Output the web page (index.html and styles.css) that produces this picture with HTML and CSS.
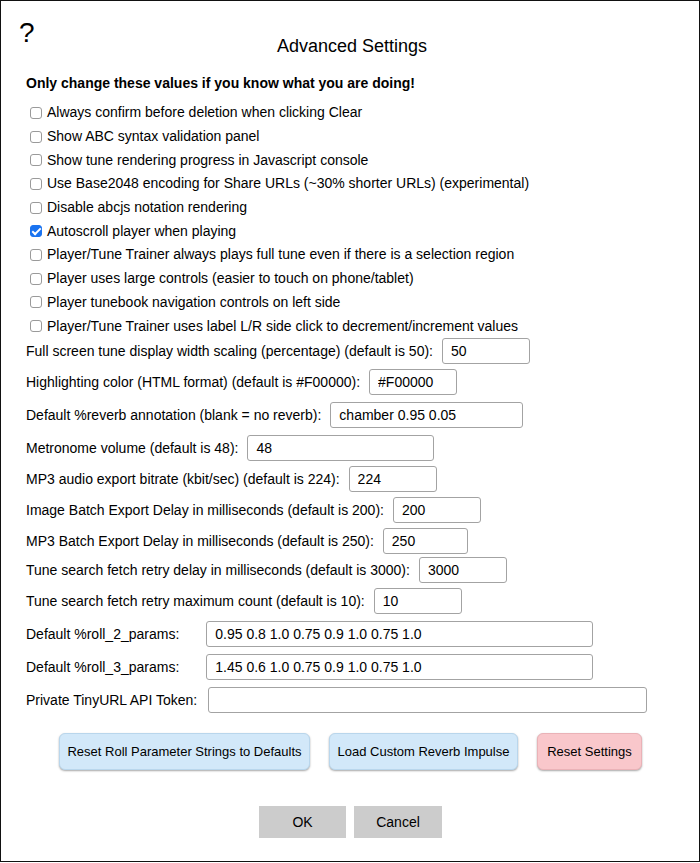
FILE: index.html
```html
<!DOCTYPE html>
<html>
<head>
<meta charset="utf-8">
<link rel="stylesheet" href="styles.css">
</head>
<body>
<div class="dialog">
  <div class="help">?</div>
  <div class="title">Advanced Settings</div>
  <div class="warning">Only change these values if you know what you are doing!</div>
  <div class="checks">
    <label class="check"><input type="checkbox"><span>Always confirm before deletion when clicking Clear</span></label>
    <label class="check"><input type="checkbox"><span>Show ABC syntax validation panel</span></label>
    <label class="check"><input type="checkbox"><span>Show tune rendering progress in Javascript console</span></label>
    <label class="check"><input type="checkbox"><span>Use Base2048 encoding for Share URLs (~30% shorter URLs) (experimental)</span></label>
    <label class="check"><input type="checkbox"><span>Disable abcjs notation rendering</span></label>
    <label class="check"><input type="checkbox" checked><span>Autoscroll player when playing</span></label>
    <label class="check"><input type="checkbox"><span>Player/Tune Trainer always plays full tune even if there is a selection region</span></label>
    <label class="check"><input type="checkbox"><span>Player uses large controls (easier to touch on phone/tablet)</span></label>
    <label class="check"><input type="checkbox"><span>Player tunebook navigation controls on left side</span></label>
    <label class="check"><input type="checkbox"><span>Player/Tune Trainer uses label L/R side click to decrement/increment values</span></label>
  </div>
  <div class="fields">
    <div class="field first"><span>Full screen tune display width scaling (percentage) (default is 50):</span><input class="in w-s" type="text" value="50"></div>
    <div class="field"><span>Highlighting color (HTML format) (default is #F00000):</span><input class="in w-s" type="text" value="#F00000"></div>
    <div class="field wide"><span>Default %reverb annotation (blank = no reverb):</span><input class="in w-m" type="text" value="chamber 0.95 0.05"></div>
    <div class="field wide"><span>Metronome volume (default is 48):</span><input class="in w-m2" type="text" value="48"></div>
    <div class="field"><span>MP3 audio export bitrate (kbit/sec) (default is 224):</span><input class="in w-s" type="text" value="224"></div>
    <div class="field"><span>Image Batch Export Delay in milliseconds (default is 200):</span><input class="in w-s" type="text" value="200"></div>
    <div class="field"><span>MP3 Batch Export Delay in milliseconds (default is 250):</span><input class="in w-s2" type="text" value="250"></div>
    <div class="field tight"><span>Tune search fetch retry delay in milliseconds (default is 3000):</span><input class="in w-s" type="text" value="3000"></div>
    <div class="field"><span>Tune search fetch retry maximum count (default is 10):</span><input class="in w-s" type="text" value="10"></div>
    <div class="field wide"><span>Default %roll_2_params:</span><input class="in w-l roll" type="text" value="0.95 0.8 1.0 0.75 0.9 1.0 0.75 1.0"></div>
    <div class="field wide"><span>Default %roll_3_params:</span><input class="in w-l roll" type="text" value="1.45 0.6 1.0 0.75 0.9 1.0 0.75 1.0"></div>
    <div class="field wide"><span>Private TinyURL API Token:</span><input class="in w-xl token" type="text" value=""></div>
  </div>
  <div class="actions">
    <button class="btn blue b1">Reset Roll Parameter Strings to Defaults</button>
    <button class="btn blue b2">Load Custom Reverb Impulse</button>
    <button class="btn pink b3">Reset Settings</button>
  </div>
  <div class="confirm">
    <button class="plain ok">OK</button>
    <button class="plain cancel">Cancel</button>
  </div>
</div>
</body>
</html>
```
FILE: styles.css
```css
* { box-sizing: border-box; }
html, body { margin: 0; padding: 0; background: #fff; }
body { font-family: "Liberation Sans", Arial, Helvetica, sans-serif; color: #000; font-size: 14px; }

.dialog {
  position: relative;
  width: 700px;
  height: 862px;
  border: 1px solid #111;
  padding: 34px 0 0 0;
}

.help {
  position: absolute;
  left: 18px;
  top: 16px;
  font-size: 28px;
  line-height: 32px;
}

.title {
  text-align: center;
  font-size: 18px;
  line-height: 22px;
  height: 22px;
  padding-left: 4px;
}

.warning {
  margin-top: 18px;
  padding-left: 25px;
  font-weight: bold;
  font-size: 14px;
  line-height: 17px;
}

.checks {
  margin-top: 9px;
  padding-left: 28px;
  display: flex;
  flex-direction: column;
}

.check {
  height: 23.7px;
  display: flex;
  align-items: center;
  line-height: 17px;
}

.check input {
  -webkit-appearance: none;
  appearance: none;
  width: 12px;
  height: 12px;
  margin: 0 5px 0 1px;
  border: 1px solid #9a9a9a;
  border-radius: 3px;
  background: #fff;
  position: relative;
  flex: none;
}

.check input:checked {
  background: #1a73f0;
  border-color: #1a73f0;
}

.check input:checked::after {
  content: "";
  position: absolute;
  left: 3px;
  top: 0px;
  width: 3px;
  height: 7px;
  border: solid #fff;
  border-width: 0 2px 2px 0;
  transform: rotate(45deg);
}

.fields {
  padding-left: 25px;
  display: flex;
  flex-direction: column;
}

.field {
  display: flex;
  align-items: center;
  height: 26px;
  white-space: nowrap;
  margin-top: 5px;
}

.field.first { margin-top: 0; }
.field.wide { margin-top: 7px; }
.field.tight { margin-top: 3px; }

.in {
  margin-left: 9px;
  height: 26px;
  border: 1px solid #a3a3a3;
  border-radius: 3px;
  padding: 0 8px;
  font-family: "Liberation Sans", Arial, Helvetica, sans-serif;
  font-size: 14px;
  color: #000;
  background: #fff;
  outline: none;
}

.in.roll { margin-left: 27px; }
.in.token { margin-left: 11px; }

.w-s { width: 88px; }
.w-s2 { width: 85px; }
.w-m { width: 193px; }
.w-m2 { width: 187px; }
.w-l { width: 387px; }
.w-xl { width: 439px; }

.actions {
  margin-top: 20px;
  display: flex;
  justify-content: center;
  gap: 19px;
  padding-left: 1px;
}

.btn {
  height: 37px;
  border-radius: 6px;
  font-family: "Liberation Sans", Arial, Helvetica, sans-serif;
  font-size: 13px;
  color: #000;
  padding: 0;
  box-shadow: 0 1px 2px rgba(0, 0, 0, 0.35);
}

.blue { background: #d2e8f9; border: 1px solid #b9d6ec; }
.pink { background: #f9c7cb; border: 1px solid #eab2b7; }
.b1 { width: 251px; }
.b2 { width: 189px; }
.b3 { width: 105px; }

.confirm {
  margin-top: 36px;
  display: flex;
  justify-content: center;
  gap: 8px;
  padding-left: 1px;
}

.plain {
  height: 32px;
  background: #cccccc;
  border: none;
  border-radius: 0;
  font-family: "Liberation Sans", Arial, Helvetica, sans-serif;
  font-size: 14px;
  color: #000;
  padding: 0;
}

.ok { width: 87px; }
.cancel { width: 88px; }
```
